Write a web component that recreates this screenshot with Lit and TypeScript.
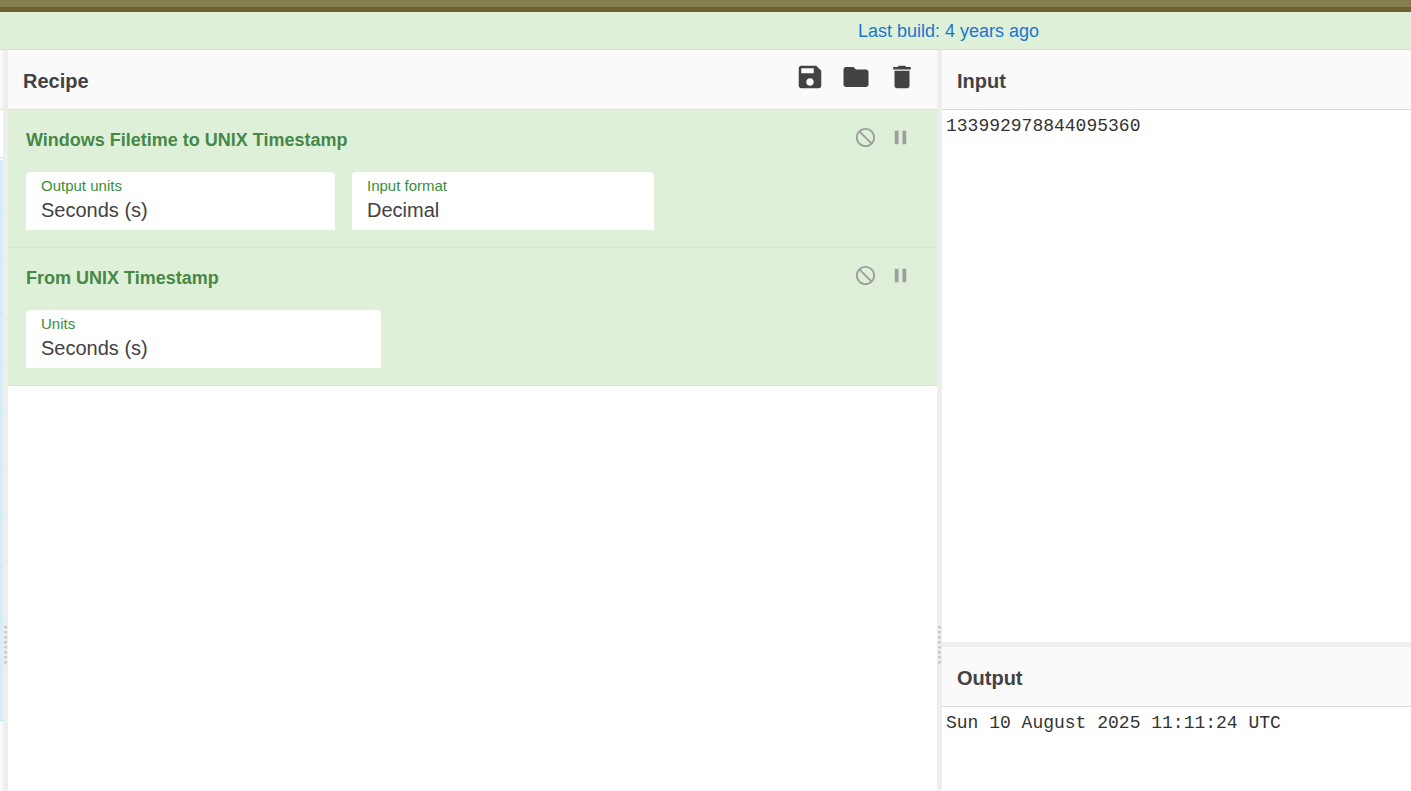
import { LitElement, html, css, svg } from "lit";
import { customElement, property } from "lit/decorators.js";

const ICONS: Record<string, string> = {
  save: "M17 3H5c-1.11 0-2 .9-2 2v14c0 1.1.89 2 2 2h14c1.1 0 2-.9 2-2V7l-4-4zm-5 16c-1.66 0-3-1.34-3-3s1.34-3 3-3 3 1.34 3 3-1.34 3-3 3zm3-10H5V5h10v4z",
  folder: "M10 4H4c-1.1 0-1.99.9-1.99 2L2 18c0 1.1.9 2 2 2h16c1.1 0 2-.9 2-2V8c0-1.1-.9-2-2-2h-8l-2-2z",
  trash: "M6 19c0 1.1.9 2 2 2h8c1.1 0 2-.9 2-2V7H6v12zM19 4h-3.5l-1-1h-5l-1 1H5v2h14V4z",
  disable:
    "M12 2C6.48 2 2 6.48 2 12s4.48 10 10 10 10-4.48 10-10S17.52 2 12 2zm0 18c-4.42 0-8-3.58-8-8 0-1.85.63-3.55 1.69-4.9L16.9 18.31C15.55 19.37 13.85 20 12 20zm6.31-3.1L7.1 5.69C8.45 4.63 10.15 4 12 4c4.42 0 8 3.58 8 8 0 1.85-.63 3.55-1.69 4.9z",
  pause: "M6 19h4V5H6v14zm8-14v14h4V5h-4z",
};

const icon = (name: string) =>
  html`<svg viewBox="0 0 24 24" aria-hidden="true">${svg`<path d=${ICONS[name]}></path>`}</svg>`;

interface Arg {
  id: string;
  label: string;
  options: string[];
  size: string;
}

interface Operation {
  name: string;
  args: Arg[];
}

const UNITS = ["Seconds (s)", "Milliseconds (ms)", "Microseconds (μs)", "Nanoseconds (ns)"];

const RECIPE: Operation[] = [
  {
    name: "Windows Filetime to UNIX Timestamp",
    args: [
      { id: "output-units", label: "Output units", options: UNITS, size: "medium" },
      { id: "input-format", label: "Input format", options: ["Decimal", "Hex (big endian)", "Hex (little endian)"], size: "small" },
    ],
  },
  { name: "From UNIX Timestamp", args: [{ id: "units", label: "Units", options: UNITS, size: "large" }] },
];

@customElement("recipe-operation")
class RecipeOperation extends LitElement {
  @property({ attribute: false }) operation!: Operation;

  static styles = css`
    :host {
      display: block;
      padding: 16px 18px 17px;
      background: #dff0d8;
      border-bottom: 1px solid #d6e9c6;
      color: #468847;
    }
    .head {
      display: flex;
      justify-content: space-between;
      align-items: flex-start;
      height: 46px;
    }
    .title {
      margin: 0;
      padding-top: 2px;
      font-size: 18px;
      line-height: 24px;
      font-weight: 700;
    }
    .controls {
      display: flex;
      gap: 12px;
      padding-right: 7px;
    }
    .control {
      display: block;
      padding: 0;
      border: 0;
      background: none;
      color: #9e9e9e;
      cursor: pointer;
    }
    .control svg {
      display: block;
      width: 23px;
      height: 23px;
      fill: currentColor;
    }
    .args {
      display: flex;
      flex-wrap: wrap;
      gap: 17px;
    }
    .arg {
      display: flex;
      flex-direction: column;
      box-sizing: border-box;
      height: 58px;
      padding-top: 4px;
      background: #fff;
      border-radius: 4px 4px 0 0;
    }
    .small {
      width: 302px;
    }
    .medium {
      width: 309px;
    }
    .large {
      width: 355px;
    }
    .label {
      padding-left: 15px;
      font-size: 15px;
      line-height: 20px;
      color: #388e3c;
    }
    .select {
      appearance: none;
      width: 100%;
      margin: 0;
      padding: 0 15px;
      border: 0;
      outline: 0;
      background: none;
      font: inherit;
      font-size: 20px;
      line-height: 28px;
      color: #424242;
    }
  `;

  render() {
    const { name, args } = this.operation;
    return html`
      <div class="head">
        <h3 class="title">${name}</h3>
        <div class="controls">
          <button class="control" aria-label="Disable operation">${icon("disable")}</button>
          <button class="control" aria-label="Set breakpoint">${icon("pause")}</button>
        </div>
      </div>
      <div class="args">
        ${args.map(
          (a) => html`<div class="arg ${a.size}">
            <label class="label" for=${a.id}>${a.label}</label>
            <select class="select" id=${a.id}>
              ${a.options.map((o) => html`<option>${o}</option>`)}
            </select>
          </div>`
        )}
      </div>
    `;
  }
}

@customElement("app-root")
class AppRoot extends LitElement {
  static styles = css`
    :host {
      display: flex;
      flex-direction: column;
      height: 100vh;
      overflow: hidden;
      background: #fff;
      color: #424242;
      font-family: "Liberation Sans", Arial, sans-serif;
    }
    .frame {
      flex: none;
      height: 7px;
      background: linear-gradient(#847c4c, #888052);
      border-bottom: 5px solid #6c6132;
    }
    .banner {
      flex: none;
      display: grid;
      grid-template-columns: 858fr 553fr;
      padding-top: 1px;
      background: #dff0d8;
      border-bottom: 1px solid #ddd;
      font-size: 18px;
      line-height: 36px;
    }
    .build {
      grid-column: 2;
      justify-self: start;
      color: #1976d2;
      text-decoration: none;
    }
    .workspace {
      flex: 1;
      min-height: 0;
      display: flex;
    }
    .operations {
      flex: none;
      width: 3px;
      overflow: hidden;
      background: #fafafa;
    }
    .search {
      height: 47px;
      background: #fff;
      border-bottom: 1px solid #ddd;
    }
    .list {
      padding-top: 2px;
      background: #fff;
    }
    .entry {
      height: 50px;
      background: #d9edf7;
      border-bottom: 1px solid #bce8f1;
    }
    .category {
      height: 50px;
      background: #fafafa;
      border-bottom: 1px solid #eee;
    }
    .gutter {
      flex: none;
      width: 5px;
      background: #eee;
      display: grid;
      grid-template-rows: 576fr 38px 127fr;
      justify-items: center;
    }
    .grip {
      grid-row: 2;
      width: 3px;
      background: repeating-linear-gradient(#ccc 0 2px, #ddd 2px 3px, #eee 3px 5px);
    }
    .recipe {
      flex: 929 1 0;
      min-width: 0;
    }
    .io {
      flex: 469 1 0;
      min-width: 0;
      display: flex;
      flex-direction: column;
    }
    .header {
      flex: none;
      box-sizing: border-box;
      height: 60px;
      display: flex;
      justify-content: space-between;
      padding: 12px 20px 0 15px;
      background: #fafafa;
      border-bottom: 1px solid #ddd;
    }
    .title {
      margin: 0;
      padding-top: 4px;
      font-size: 20px;
      line-height: 30px;
      font-weight: 700;
    }
    .tools {
      display: flex;
      align-items: flex-start;
      gap: 16px;
    }
    .tool {
      padding: 0;
      border: 0;
      background: none;
      color: #424242;
      cursor: pointer;
    }
    .tool svg {
      display: block;
      width: 30px;
      height: 30px;
      fill: currentColor;
    }
    .input {
      flex: 592 1 0;
    }
    .output {
      flex: 144 1 0;
    }
    .pane {
      min-height: 0;
      display: flex;
      flex-direction: column;
    }
    .divider {
      flex: none;
      height: 5px;
      background: #eee;
    }
    .text {
      flex: 1;
      min-height: 0;
      margin: 0;
      padding: 4px;
      border: 0;
      outline: 0;
      resize: none;
      background: #fff;
      color: #333;
      font-family: "Liberation Mono", "Courier New", monospace;
      font-size: 18px;
      line-height: 25px;
    }
  `;

  render() {
    return html`
      <div class="frame"></div>
      <div class="banner"><a class="build" href="#">Last build: 4 years ago</a></div>
      <main class="workspace">
        <aside class="operations">
          <div class="header"></div>
          <div class="search"></div>
          <div class="list">${Array.from({ length: 11 }, () => html`<div class="entry"></div>`)}</div>
          <div class="category"></div>
        </aside>
        <div class="gutter"><div class="grip"></div></div>
        <section class="recipe">
          <div class="header">
            <h2 class="title">Recipe</h2>
            <div class="tools">
              <button class="tool" aria-label="Save recipe">${icon("save")}</button>
              <button class="tool" aria-label="Load recipe">${icon("folder")}</button>
              <button class="tool" aria-label="Clear recipe">${icon("trash")}</button>
            </div>
          </div>
          ${RECIPE.map((op) => html`<recipe-operation .operation=${op}></recipe-operation>`)}
        </section>
        <div class="gutter"><div class="grip"></div></div>
        <section class="io">
          <div class="pane input">
            <div class="header"><h2 class="title"><label for="input">Input</label></h2></div>
            <textarea class="text" id="input" spellcheck="false" .value=${"133992978844095360"}></textarea>
          </div>
          <div class="divider"></div>
          <div class="pane output">
            <div class="header"><h2 class="title"><label for="output">Output</label></h2></div>
            <textarea class="text" id="output" readonly .value=${"Sun 10 August 2025 11:11:24 UTC"}></textarea>
          </div>
        </section>
      </main>
    `;
  }
}
